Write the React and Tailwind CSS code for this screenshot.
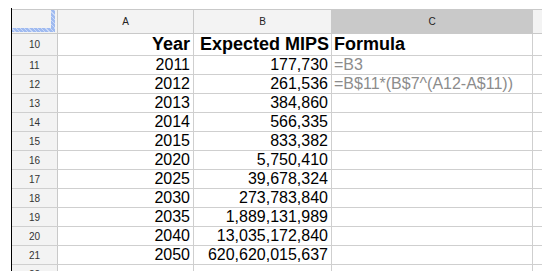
import React from "react";

const rows = [
  { n: 11, year: "2011", mips: "177,730", formula: "=B3" },
  { n: 12, year: "2012", mips: "261,536", formula: "=B$11*(B$7^(A12-A$11))" },
  { n: 13, year: "2013", mips: "384,860" },
  { n: 14, year: "2014", mips: "566,335" },
  { n: 15, year: "2015", mips: "833,382" },
  { n: 16, year: "2020", mips: "5,750,410" },
  { n: 17, year: "2025", mips: "39,678,324" },
  { n: 18, year: "2030", mips: "273,783,840" },
  { n: 19, year: "2035", mips: "1,889,131,989" },
  { n: 20, year: "2040", mips: "13,035,172,840" },
  { n: 21, year: "2050", mips: "620,620,015,637" },
  { n: 22, year: "", mips: "" },
];

function RowNum({ children }) {
  return (
    <div className="w-[46px] shrink-0 border-r border-[#c9c9c9] bg-[#f3f3f3] flex items-center justify-center text-[10px] text-[#333]">
      {children}
    </div>
  );
}

export default function App() {
  return (
    <div
      className="w-[542px] h-[271px] overflow-hidden bg-white"
      style={{ fontFamily: '"Liberation Sans", Arial, sans-serif' }}
    >
      <div className="ml-[11px] mt-[8px] border-l border-black pt-[1px]">
        {/* column headers */}
        <div className="flex h-[25px] border-t border-b border-[#c9c9c9]">
          <div className="w-[46px] shrink-0 border-r border-[#c9c9c9] bg-[#f3f3f3] relative">
            <div className="absolute right-[2px] top-0 bottom-[1px] w-[4px] bg-[repeating-linear-gradient(45deg,#9fbaf0_0px,#9fbaf0_2px,#c9d8f7_2px,#c9d8f7_3px)]" />
            <div className="absolute left-0 right-[2px] bottom-[1px] h-[4px] bg-[repeating-linear-gradient(45deg,#9fbaf0_0px,#9fbaf0_2px,#c9d8f7_2px,#c9d8f7_3px)]" />
          </div>
          <div className="w-[136px] shrink-0 border-r border-[#c9c9c9] bg-[#f3f3f3] flex items-center justify-center text-[10px] text-[#222]">A</div>
          <div className="w-[138px] shrink-0 border-r border-[#c9c9c9] bg-[#f3f3f3] flex items-center justify-center text-[10px] text-[#222]">B</div>
          <div className="w-[201px] shrink-0 border-r border-[#c9c9c9] bg-[#c9c9c9] flex items-center justify-center text-[10px] text-[#222]">C</div>
          <div className="flex-1 bg-[#f3f3f3]" />
        </div>

        {/* header row */}
        <div className="flex h-[22px] border-b border-[#cfcfcf]">
          <RowNum>10</RowNum>
          <div className="w-[136px] shrink-0 border-r border-[#cfcfcf] flex items-center justify-end pr-[3px] text-[18px] font-bold text-black">Year</div>
          <div className="w-[138px] shrink-0 border-r border-[#cfcfcf] flex items-center justify-end pr-[2px] text-[18px] font-bold text-black whitespace-nowrap">Expected MIPS</div>
          <div className="w-[201px] shrink-0 border-r border-[#cfcfcf] flex items-center pl-[2px] text-[18px] font-bold text-black">Formula</div>
          <div className="flex-1" />
        </div>

        {rows.map((r) => (
          <div key={r.n} className="flex h-[19px] border-b border-[#cfcfcf]">
            <RowNum>{r.n}</RowNum>
            <div className="w-[136px] shrink-0 border-r border-[#cfcfcf] flex items-center justify-end pr-[3px] text-[16px] text-black">{r.year}</div>
            <div className="w-[138px] shrink-0 border-r border-[#cfcfcf] flex items-center justify-end pr-[3px] text-[16px] text-black whitespace-nowrap">{r.mips}</div>
            <div className="w-[201px] shrink-0 border-r border-[#cfcfcf] flex items-center pl-[2px] text-[16px] text-[#8c8c8c] whitespace-nowrap">{r.formula}</div>
            <div className="flex-1" />
          </div>
        ))}
      </div>
    </div>
  );
}
